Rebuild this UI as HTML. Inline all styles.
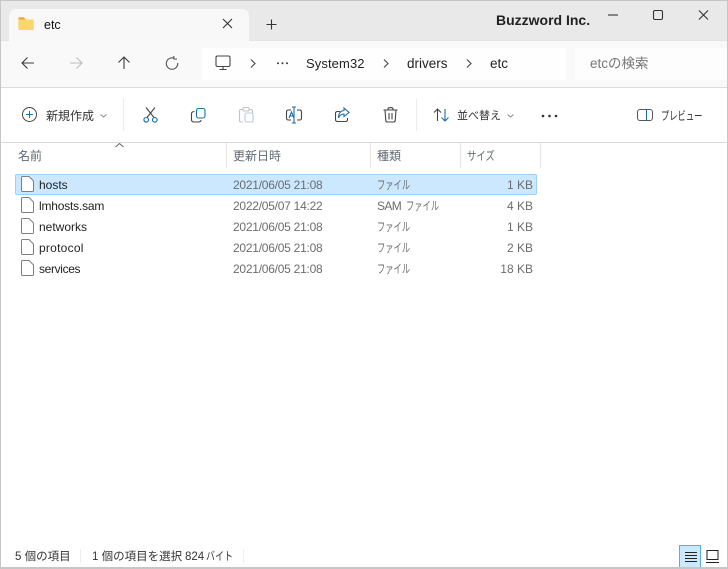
<!DOCTYPE html>
<html lang="ja"><head><meta charset="utf-8"><title>etc</title>
<style>
html,body{margin:0;padding:0;background:#fff}
#w{position:relative;width:728px;height:569px;overflow:hidden;background:#fff;font-family:"Liberation Sans","Noto Sans CJK JP",sans-serif;color:#1f1f1f}
#w div{position:absolute;white-space:nowrap}
.t{position:absolute;white-space:nowrap;line-height:16px}
.f{font-size:12px;color:#1f1f1f}
.g{font-size:12px;color:#6d6d6d}
.d{font-size:12px;color:#6d6d6d;letter-spacing:-.25px;left:233px}
.k{font-size:12px;color:#6d6d6d;transform:scaleX(.69);transform-origin:0 50%}
.h{font-size:12px;color:#5f6a73}
.j{font-size:12px;color:#333}
svg{position:absolute;overflow:visible}
</style></head><body><div id="w">
<div style="left:0;top:0;width:728px;height:41px;background:#e9e9e9"></div>
<div style="left:9px;top:9px;width:240px;height:32px;background:#f8f8f8;border-radius:7px 7px 0 0"></div>
<div style="left:0;top:40px;width:728px;height:46px;background:#f9f9f9;border-top:1px solid #e4e4e4;border-bottom:1px solid #dcdcdc"></div>
<div style="left:9px;top:39px;width:240px;height:3px;background:#f9f9f9"></div>
<div style="left:202px;top:48px;width:364px;height:32px;background:#fefefe"></div>
<div style="left:575px;top:48px;width:153px;height:32px;background:#fdfdfd"></div>

<svg style="left:18px;top:17px" width="16" height="13"><path d="M0.500 3V1Q0.500 0.300 1 0.300H6L8 3Z" fill="#e8a92c"/><rect x="0.300" y="2.500" width="15.500" height="10.500" rx="1" fill="#fbd76b"/></svg>
<span class="t" style="left:44px;top:17px;font-size:12.500px;color:#111">etc</span>
<svg style="left:222px;top:18px" width="12" height="12" fill="none" stroke="#333" stroke-width="1.100"><path d="M1 1l9 9M10 1l-9 9"/></svg>
<svg style="left:266px;top:19px" width="11" height="11" fill="none" stroke="#333" stroke-width="1.100"><path d="M5.500 0.500v10M0.500 5.500h10"/></svg>
<span class="t" style="left:496px;top:12px;font-size:14px;font-weight:bold;color:#222">Buzzword Inc.</span>
<svg style="left:608px;top:10px" width="110" height="12" fill="none" stroke="#333" stroke-width="1.100"><path d="M0 5h10"/><rect x="45.500" y="0.500" width="9" height="9" rx="1.500"/><path d="M91 0.500l9 9M100 0.500l-9 9"/></svg>

<svg style="left:21px;top:56px" width="14" height="14" fill="none" stroke="#3a3a3a" stroke-width="1.100"><path d="M13 7H1M6.500 1.500L1 7l5.500 5.500"/></svg>
<svg style="left:69px;top:56px" width="14" height="14" fill="none" stroke="#bcbcbc" stroke-width="1.100"><path d="M1 7h12M7.500 1.500L13 7l-5.500 5.500"/></svg>
<svg style="left:117px;top:56px" width="14" height="14" fill="none" stroke="#3a3a3a" stroke-width="1.100"><path d="M7 13V1M1.500 6.500L7 1l5.500 5.500"/></svg>
<svg style="left:165px;top:56px" width="14" height="14" fill="none" stroke="#555" stroke-width="1.100"><path d="M9 2.200A5.700 5.700 0 1 0 12.700 7"/><path d="M8.800 0v3H12"/></svg>
<svg style="left:215px;top:55px" width="17" height="16" fill="none" stroke="#444" stroke-width="1.100"><rect x="1" y="1" width="14" height="10.500" rx="1.500"/><path d="M8 11.500v2.500M4.500 14.500h7"/></svg>
<svg style="left:250px;top:59px" width="6" height="10" fill="none" stroke="#444" stroke-width="1.100"><path d="M1 0.500l4 4-4 4"/></svg>
<svg style="left:276px;top:62px" width="13" height="3" fill="#333"><circle cx="2" cy="1.200" r="1"/><circle cx="6.500" cy="1.200" r="1"/><circle cx="11" cy="1.200" r="1"/></svg>
<span class="t" style="left:306px;top:56px;font-size:13px;letter-spacing:.1px;color:#222">System32</span>
<svg style="left:383px;top:59px" width="6" height="10" fill="none" stroke="#444" stroke-width="1.100"><path d="M1 0.500l4 4-4 4"/></svg>
<span class="t" style="left:407px;top:56px;font-size:13.500px;color:#222">drivers</span>
<svg style="left:466px;top:59px" width="6" height="10" fill="none" stroke="#444" stroke-width="1.100"><path d="M1 0.500l4 4-4 4"/></svg>
<span class="t" style="left:490px;top:56px;font-size:13.500px;color:#222">etc</span>
<span class="t" style="left:590px;top:56px;font-size:13.500px;color:#777">etcの検索</span>

<svg style="left:22px;top:107px" width="15" height="15" fill="none" stroke="#444" stroke-width="1"><circle cx="7.500" cy="7.500" r="7"/><path d="M7.500 4v7M4 7.500h7" stroke="#1a6fa8"/></svg>
<span class="t j" style="left:46px;top:108px">新規作成</span>
<svg style="left:100px;top:114px" width="7" height="4" fill="none" stroke="#888"><path d="M0.500 0.500l3 2.500 3-2.500"/></svg>
<div style="left:123px;top:99px;width:1px;height:32px;background:#ececec"></div>
<svg style="left:143px;top:107px" width="15" height="16" fill="none" stroke-width="1.100"><path d="M3 0.500l8 10M12 0.500l-8 10" stroke="#444"/><circle cx="3.200" cy="12.800" r="2.300" stroke="#1a6fa8"/><circle cx="11.800" cy="12.800" r="2.300" stroke="#1a6fa8"/></svg>
<svg style="left:191px;top:108px" width="15" height="15" fill="none" stroke-width="1.100"><rect x="5.500" y="0.500" width="8.500" height="9.500" rx="2" stroke="#1a6fa8"/><path d="M3.500 3.500Q0.500 3.500 0.500 6v5.500Q0.500 14 3 14h4q3 0 3-2" stroke="#444"/></svg>
<svg style="left:239px;top:107px" width="15" height="16" fill="none" stroke-width="1.100" stroke="#c4c4c4"><path d="M4 2.500H2Q0.500 2.500 0.500 4v9.500Q0.500 15 2 15h2"/><rect x="4" y="0.500" width="6" height="3.500" rx="1"/><path d="M10 2.500h2q1.500 0 1.500 1.500v2"/><rect x="6" y="6" width="8" height="9" rx="1.500" stroke="#b5cfdc"/></svg>
<svg style="left:286px;top:106px" width="16" height="18" fill="none" stroke-width="1.100"><path d="M5 4H2.500Q0.500 4 0.500 6v6Q0.500 14 2.500 14H5M11 4h2.500q2 0 2 2v6q0 2-2 2H11" stroke="#444"/><path d="M8 1v16M6 1h4M6 17h4" stroke="#1a6fa8"/><path d="M3 12l2.500-6 2.500 6M3.800 10h3.500" stroke="#1a6fa8"/></svg>
<svg style="left:335px;top:107px" width="15" height="16" fill="none" stroke-width="1.100"><path d="M5 4.500H2.500q-2 0-2 2v6q0 2 2 2h8q2 0 2-2V11" stroke="#444"/><path d="M9 1l5 4.500L9 9.500V7Q5 7 3.500 11 3.500 4 9 3.500Z" stroke="#1a6fa8"/></svg>
<svg style="left:383px;top:107px" width="15" height="16" fill="none" stroke="#444" stroke-width="1.100"><path d="M0.500 3h14M5 3V2.200Q5 0.700 6.500 0.700h2Q10 0.700 10 2.200V3M2 3l0.800 10.500Q3 15 4.500 15h6q1.500 0 1.700-1.500L13 3M6 6v6.500M9 6v6.500"/></svg>
<div style="left:416px;top:99px;width:1px;height:32px;background:#ececec"></div>
<svg style="left:433px;top:108px" width="17" height="14" fill="none" stroke-width="1.100"><path d="M4.500 13V1M1 4.500L4.500 1 8 4.500" stroke="#444"/><path d="M12 1v12M8.500 9.500L12 13l3.500-3.500" stroke="#1a6fa8"/></svg>
<span class="t j" style="left:457px;top:108px;font-size:11px">並べ替え</span>
<svg style="left:507px;top:114px" width="7" height="4" fill="none" stroke="#888"><path d="M0.500 0.500l3 2.500 3-2.500"/></svg>
<svg style="left:541px;top:114px" width="18" height="4" fill="#333"><circle cx="2" cy="2" r="1.300"/><circle cx="8.500" cy="2" r="1.300"/><circle cx="15" cy="2" r="1.300"/></svg>
<svg style="left:637px;top:109px" width="16" height="12" fill="none" stroke-width="1"><rect x="0.500" y="0.500" width="15" height="11" rx="2.500" stroke="#555"/><path d="M9.500 0.500v11" stroke="#1a6fa8"/></svg>
<span class="t j" style="left:661px;top:108px;transform:scaleX(.69);transform-origin:0 50%">プレビュー</span>

<div style="left:0;top:142px;width:728px;height:1px;background:#d9d9d9"></div>
<svg style="left:115px;top:143px" width="9" height="5" fill="none" stroke="#666"><path d="M0.500 4L4.500 0.500 8.500 4"/></svg>
<div style="left:226px;top:143px;width:1px;height:25px;background:#e4e4e4"></div>
<div style="left:370px;top:143px;width:1px;height:25px;background:#e4e4e4"></div>
<div style="left:460px;top:143px;width:1px;height:25px;background:#e4e4e4"></div>
<div style="left:540px;top:143px;width:1px;height:25px;background:#e4e4e4"></div>
<span class="t h" style="left:18px;top:148px">名前</span>
<span class="t h" style="left:233px;top:148px">更新日時</span>
<span class="t h" style="left:377px;top:148px">種類</span>
<span class="t h" style="left:467px;top:148px;transform:scaleX(.78);transform-origin:0 50%">サイズ</span>

<div style="left:15px;top:174px;width:522px;height:21px;background:#cce8ff;border:1px solid #99d1ff;box-sizing:border-box;border-radius:2px"></div>

<svg style="left:21px;top:176px" width="13" height="105" fill="#fff" stroke="#808080" stroke-width="1">
<path d="M0.500 1.500Q0.500 0.500 1.500 0.500H8L12.500 5V14.500Q12.500 15.500 11.500 15.500H1.500Q0.500 15.500 0.500 14.500Z"/>
<path d="M0.500 22.500Q0.500 21.500 1.500 21.500H8L12.500 26V35.500Q12.500 36.500 11.500 36.500H1.500Q0.500 36.500 0.500 35.500Z"/>
<path d="M0.500 43.500Q0.500 42.500 1.500 42.500H8L12.500 47V56.500Q12.500 57.500 11.500 57.500H1.500Q0.500 57.500 0.500 56.500Z"/>
<path d="M0.500 64.500Q0.500 63.500 1.500 63.500H8L12.500 68V77.500Q12.500 78.500 11.500 78.500H1.500Q0.500 78.500 0.500 77.500Z"/>
<path d="M0.500 85.500Q0.500 84.500 1.500 84.500H8L12.500 89V98.500Q12.500 99.500 11.500 99.500H1.500Q0.500 99.500 0.500 98.500Z"/>
</svg>

<span class="t f" style="left:39px;top:177px">hosts</span>
<span class="t d" style="top:177px">2021/06/05 21:08</span>
<span class="t k" style="left:377px;top:177px">ファイル</span>
<span class="t g" style="right:195px;top:177px">1 KB</span>

<span class="t f" style="left:39px;top:198px;letter-spacing:-.2px">lmhosts.sam</span>
<span class="t d" style="top:198px">2022/05/07 14:22</span>
<span class="t g" style="left:377px;top:198px;letter-spacing:-.6px">SAM</span>
<span class="t k" style="left:406px;top:198px">ファイル</span>
<span class="t g" style="right:195px;top:198px">4 KB</span>

<span class="t f" style="left:39px;top:219px">networks</span>
<span class="t d" style="top:219px">2021/06/05 21:08</span>
<span class="t k" style="left:377px;top:219px">ファイル</span>
<span class="t g" style="right:195px;top:219px">1 KB</span>

<span class="t f" style="left:39px;top:240px;letter-spacing:.25px">protocol</span>
<span class="t d" style="top:240px">2021/06/05 21:08</span>
<span class="t k" style="left:377px;top:240px">ファイル</span>
<span class="t g" style="right:195px;top:240px">2 KB</span>

<span class="t f" style="left:39px;top:261px;letter-spacing:-.35px">services</span>
<span class="t d" style="top:261px">2021/06/05 21:08</span>
<span class="t k" style="left:377px;top:261px">ファイル</span>
<span class="t g" style="right:195px;top:261px">18 KB</span>

<span class="t" style="left:15px;top:549px;font-size:11.500px;color:#333">5 個の項目</span>
<div style="left:80px;top:549px;width:1px;height:14px;background:#eee"></div>
<span class="t" style="left:92px;top:549px;font-size:11.500px;color:#333">1 個の項目を選択</span>
<span class="t" style="left:185px;top:549px;font-size:11.500px;color:#333">824</span>
<span class="t" style="left:206px;top:549px;font-size:11.500px;color:#333;transform:scaleX(.78);transform-origin:0 50%">バイト</span>
<div style="left:243px;top:549px;width:1px;height:14px;background:#eee"></div>

<div style="left:679px;top:545px;width:22px;height:23px;background:#cce8ff;border:1px solid #5fb0cf;box-sizing:border-box"></div>
<svg style="left:685px;top:551px" width="12" height="11" stroke="#222" stroke-width="1"><path d="M0 1.500h12M0 4.500h12M0 7.500h12M0 10.500h12"/></svg>
<svg style="left:706px;top:550px" width="13" height="13" fill="none" stroke="#222" stroke-width="1"><rect x="1" y="0.500" width="11" height="9"/><path d="M0 12.500h13"/></svg>

<div style="left:0;top:0;width:728px;height:569px;box-sizing:border-box;border:1px solid #c6c6c6;border-bottom-width:2px"></div>
</div></body></html>
